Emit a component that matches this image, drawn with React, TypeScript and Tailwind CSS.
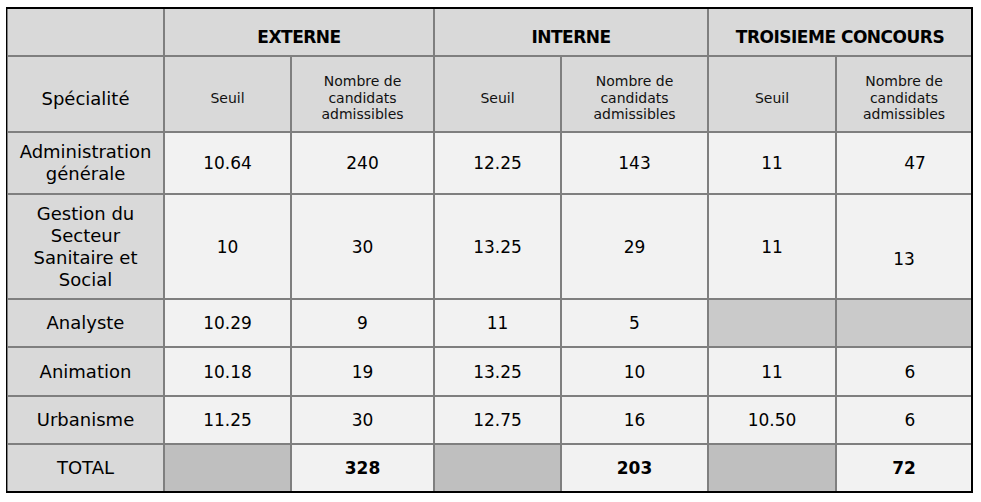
import React from "react";

type Cell = {
  text?: string;
  kind: "label" | "data" | "empty" | "emptyDark" | "total";
  extra?: string;
};

const rows: Cell[][] = [
  [
    { text: "Administration générale", kind: "label" },
    { text: "10.64", kind: "data" },
    { text: "240", kind: "data" },
    { text: "12.25", kind: "data" },
    { text: "143", kind: "data" },
    { text: "11", kind: "data" },
    { text: "47", kind: "data", extra: "pl-[22px]" },
  ],
  [
    { text: "Gestion du Secteur Sanitaire et Social", kind: "label" },
    { text: "10", kind: "data" },
    { text: "30", kind: "data" },
    { text: "13.25", kind: "data" },
    { text: "29", kind: "data" },
    { text: "11", kind: "data" },
    { text: "13", kind: "data", extra: "pt-[24px]" },
  ],
  [
    { text: "Analyste", kind: "label" },
    { text: "10.29", kind: "data" },
    { text: "9", kind: "data" },
    { text: "11", kind: "data" },
    { text: "5", kind: "data" },
    { kind: "empty" },
    { kind: "empty" },
  ],
  [
    { text: "Animation", kind: "label" },
    { text: "10.18", kind: "data" },
    { text: "19", kind: "data" },
    { text: "13.25", kind: "data" },
    { text: "10", kind: "data" },
    { text: "11", kind: "data" },
    { text: "6", kind: "data", extra: "pl-[12px]" },
  ],
  [
    { text: "Urbanisme", kind: "label" },
    { text: "11.25", kind: "data" },
    { text: "30", kind: "data" },
    { text: "12.75", kind: "data" },
    { text: "16", kind: "data" },
    { text: "10.50", kind: "data" },
    { text: "6", kind: "data", extra: "pl-[12px]" },
  ],
  [
    { text: "TOTAL", kind: "label" },
    { kind: "emptyDark" },
    { text: "328", kind: "total" },
    { kind: "emptyDark" },
    { text: "203", kind: "total" },
    { kind: "emptyDark" },
    { text: "72", kind: "total" },
  ],
];

function BodyCell({ c }: { c: Cell }) {
  if (c.kind === "label") {
    return (
      <div className="bg-[#d9d9d9] flex items-center justify-center text-center text-[18px] leading-[22px] text-black px-[8px]">
        {c.text}
      </div>
    );
  }
  if (c.kind === "empty") return <div className="bg-[#cacaca]" />;
  if (c.kind === "emptyDark") return <div className="bg-[#bfbfbf]" />;
  return (
    <div
      className={`bg-[#f2f2f2] flex items-center justify-center text-[17px] leading-[22px] text-black ${
        c.kind === "total" ? "font-bold" : ""
      } ${c.extra ?? ""}`}
    >
      {c.text}
    </div>
  );
}

function SmallHead({ lines }: { lines: string[] }) {
  return (
    <div className="bg-[#d9d9d9] flex flex-col items-center justify-center pt-[8px] text-[14px] leading-[16.5px] text-[#111]">
      {lines.map((l) => (
        <span key={l}>{l}</span>
      ))}
    </div>
  );
}

export default function App() {
  return (
    <div
      className="bg-white w-[981px] h-[502px] pt-[7px] pl-[6px]"
      style={{ fontFamily: '"DejaVu Sans", Verdana, sans-serif' }}
    >
      <div className="w-fit border-l border-black border-t-2 border-r-2 border-b-2">
        <div className="grid bg-[#7f7f7f] gap-[2px] pl-[1px] grid-cols-[155px_125px_141px_125px_145px_126px_134px] grid-rows-[46px_74px_60px_103px_46px_47px_46px_46px]">
          <div className="bg-[#d9d9d9]" />
          <div className="col-span-2 bg-[#d9d9d9] flex items-center justify-center pt-[11px] text-[17px] font-bold tracking-[-0.5px] text-black">
            EXTERNE
          </div>
          <div className="col-span-2 bg-[#d9d9d9] flex items-center justify-center pt-[11px] text-[17px] font-bold tracking-[-0.5px] text-black">
            INTERNE
          </div>
          <div className="col-span-2 bg-[#d9d9d9] flex items-center justify-center pt-[11px] text-[17px] font-bold tracking-[-0.5px] text-black">
            TROISIEME CONCOURS
          </div>

          <div className="bg-[#d9d9d9] flex items-center justify-center pt-[8px] text-[18px] text-black">
            Spécialité
          </div>
          <SmallHead lines={["Seuil"]} />
          <SmallHead lines={["Nombre de", "candidats", "admissibles"]} />
          <SmallHead lines={["Seuil"]} />
          <SmallHead lines={["Nombre de", "candidats", "admissibles"]} />
          <SmallHead lines={["Seuil"]} />
          <SmallHead lines={["Nombre de", "candidats", "admissibles"]} />

          {rows.map((r, i) =>
            r.map((c, j) => <BodyCell key={`${i}-${j}`} c={c} />)
          )}
        </div>
      </div>
    </div>
  );
}
